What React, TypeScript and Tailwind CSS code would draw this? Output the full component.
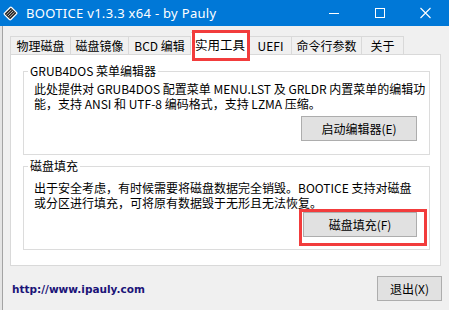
import React from "react";

const tabs = [
  { label: "物理磁盘", w: "w-[61px]" },
  { label: "磁盘镜像", w: "w-[58px]" },
  { label: "BCD 编辑", w: "w-[62px]" },
  { label: "实用工具", w: "w-[59px]", active: true },
  { label: "UEFI", w: "w-[42px]" },
  { label: "命令行参数", w: "w-[70px]" },
  { label: "关于", w: "w-[42px]" },
];

/* -----------------------------
   APP ICON (little disk diamond)
------------------------------*/
function AppIcon() {
  return (
    <svg width="15" height="15" viewBox="0 0 15 15">
      <g transform="rotate(-45 7.5 7.5)">
        <rect x="2.5" y="3" width="10" height="9" rx="1" fill="#2b2b2b" stroke="#fff" strokeWidth="1.2" />
        <line x1="4" y1="5.5" x2="11" y2="5.5" stroke="#cfcfcf" strokeWidth="0.8" />
        <line x1="4" y1="7.5" x2="11" y2="7.5" stroke="#cfcfcf" strokeWidth="0.8" />
        <line x1="4" y1="9.5" x2="11" y2="9.5" stroke="#cfcfcf" strokeWidth="0.8" />
      </g>
    </svg>
  );
}

function Group({
  title,
  children,
  className,
}: {
  title: string;
  children: React.ReactNode;
  className: string;
}) {
  return (
    <div className={`relative border border-[#dcdcdc] ${className}`}>
      <span className="absolute left-[4px] top-[-9px] bg-white px-[2px] leading-[16px]">{title}</span>
      {children}
    </div>
  );
}

export default function App() {
  return (
    <div className="relative w-[449px] h-[310px] overflow-hidden bg-[#f0f0f0] text-[12px] text-black font-['Noto_Sans_CJK_SC',sans-serif]">
      {/* TITLE BAR */}
      <div className="h-[26px] bg-[#0078d7] flex items-center text-white">
        <div className="ml-[3px] flex items-center">
          <AppIcon />
        </div>
        <span className="ml-[8px] text-[13px] leading-[16px] tracking-[0.3px] font-['Noto_Sans',sans-serif]">
          BOOTICE v1.3.3 x64 - by Pauly
        </span>
        <div className="ml-auto flex items-center h-full">
          <svg width="46" height="26" viewBox="0 0 46 26">
            <line x1="18" y1="13.5" x2="28" y2="13.5" stroke="#fff" strokeWidth="1" />
          </svg>
          <svg width="46" height="26" viewBox="0 0 46 26">
            <rect x="18.5" y="8.5" width="9" height="9" fill="none" stroke="#fff" strokeWidth="1" />
          </svg>
          <svg width="46" height="26" viewBox="0 0 46 26">
            <path d="M17.5 8 L27.5 18 M27.5 8 L17.5 18" stroke="#fff" strokeWidth="1.1" />
          </svg>
        </div>
      </div>

      {/* BODY */}
      <div className="h-[284px] shadow-[inset_2px_0_0_#e4e4e4,inset_3px_0_0_#a3a3a3] flex flex-col">
        {/* TABS */}
        <div className="mt-[6px] ml-[10px] h-[22px] flex items-end relative z-10">
          {tabs.map((t, i) =>
            t.active ? (
              <div
                key={t.label}
                className={`${t.w} h-[24px] mb-[-2px] bg-white border-t border-r border-[#d9d9d9] flex items-center justify-center leading-[16px] text-[12.5px]`}
              >
                {t.label}
              </div>
            ) : (
              <div
                key={t.label}
                className={`${t.w} h-[18px] bg-[#f0f0f0] border-t border-r border-[#d9d9d9] ${i === 0 ? "border-l" : ""} flex items-center justify-center leading-[16px]`}
              >
                {t.label}
              </div>
            )
          )}
        </div>

        {/* PANEL */}
        <div className="ml-[10px] w-[431px] h-[212px] bg-white border border-[#d9d9d9] flex flex-col">
          <Group title="GRUB4DOS 菜单编辑器" className="mt-[16px] ml-[12px] w-[407px] h-[84px] pt-[9px] pl-[10px]">
            <div className="h-[15px] leading-[15px]">此处提供对 GRUB4DOS 配置菜单 MENU.LST 及 GRLDR 内置菜单的编辑功</div>
            <div className="h-[15px] leading-[15px]">能，支持 ANSI 和 UTF-8 编码格式，支持 LZMA 压缩。</div>
            <div className="flex justify-end mr-[12px] mt-[5px]">
              <button className="w-[116px] h-[25px] bg-[#e1e1e1] border border-[#adadad] leading-[16px]">
                启动编辑器(E)
              </button>
            </div>
          </Group>

          <Group title="磁盘填充" className="mt-[11px] ml-[12px] w-[407px] h-[84px] pt-[13px] pl-[10px]">
            <div className="h-[15px] leading-[15px]">出于安全考虑，有时候需要将磁盘数据完全销毁。BOOTICE 支持对磁盘</div>
            <div className="h-[15px] leading-[15px]">或分区进行填充，可将原有数据毁于无形且无法恢复。</div>
            <div className="flex justify-end mr-[12px] mt-[2px]">
              <button className="w-[114px] h-[25px] bg-[#e1e1e1] border border-[#adadad] leading-[16px]">
                磁盘填充(F)
              </button>
            </div>
          </Group>
        </div>

        {/* FOOTER */}
        <div className="flex items-center ml-[12px] mr-[7px] mt-[10px]">
          <span className="font-bold text-[10.5px] leading-[14px] text-[#1b1478] font-['DejaVu_Sans',sans-serif]">
            http://www.ipauly.com
          </span>
          <button className="ml-auto w-[65px] h-[25px] bg-[#e1e1e1] border border-[#adadad] leading-[16px]">
            退出(X)
          </button>
        </div>
      </div>

      {/* HIGHLIGHTS */}
      <div className="absolute left-[192px] top-[30px] w-[58px] h-[31px] border-[3px] border-[#f23c3c] z-20" />
      <div className="absolute left-[299px] top-[209px] w-[128px] h-[37px] border-[3px] border-[#f23c3c] z-20" />
    </div>
  );
}
